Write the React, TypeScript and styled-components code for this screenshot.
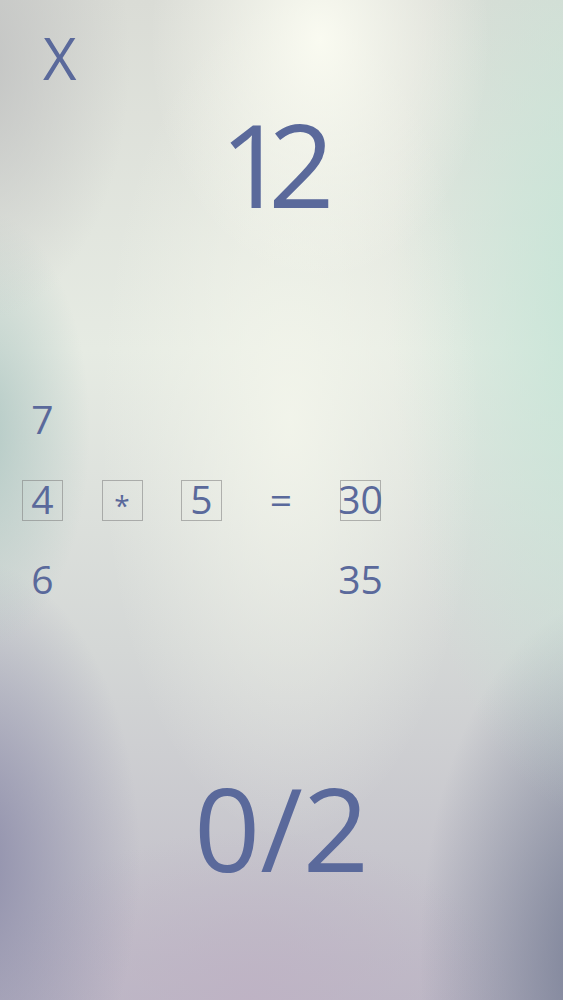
import React from 'react';
import styled, { createGlobalStyle } from 'styled-components';

const GlobalStyle = createGlobalStyle`
  html, body {
    margin: 0;
    padding: 0;
  }
  body {
    font-family: 'Open Sans', 'Noto Sans', sans-serif;
  }
`;

const INK = '#5a699b';

const Screen = styled.div`
  position: relative;
  width: 563px;
  min-height: 1000px;
  box-sizing: border-box;
  padding-top: 30px;
  overflow: hidden;
  color: ${INK};
  background:
    radial-gradient(ellipse 170px 240px at 320px 40px, rgba(251, 252, 242, 0.95), rgba(251, 252, 242, 0) 100%),
    radial-gradient(ellipse 190px 420px at 290px 420px, rgba(244, 246, 236, 0.85), rgba(244, 246, 236, 0) 100%),
    radial-gradient(ellipse 210px 520px at 600px 300px, rgba(196, 228, 214, 0.95), rgba(196, 228, 214, 0) 100%),
    radial-gradient(ellipse 150px 260px at -20px 60px, rgba(192, 193, 193, 0.9), rgba(192, 193, 193, 0) 100%),
    radial-gradient(ellipse 110px 220px at -20px 430px, rgba(170, 196, 192, 0.85), rgba(170, 196, 192, 0) 100%),
    radial-gradient(ellipse 170px 300px at -30px 860px, rgba(138, 138, 168, 0.95), rgba(138, 138, 168, 0) 100%),
    radial-gradient(ellipse 190px 360px at 610px 960px, rgba(112, 120, 144, 0.95), rgba(112, 120, 144, 0) 100%),
    radial-gradient(ellipse 260px 170px at 250px 1000px, rgba(190, 178, 196, 0.9), rgba(190, 178, 196, 0) 100%),
    linear-gradient(180deg, #dadcd6 0%, #e6ebe3 35%, #d4d7d6 65%, #bdb9c6 100%);
`;

const CloseMark = styled.div`
  padding-left: 43px;
  font-size: 58px;
  line-height: 56px;
  height: 56px;
`;

/* the digits sit tighter than Open Sans' tabular figures */
const Timer = styled.div`
  margin-top: 19px;
  padding-left: 220px;
  font-size: 116px;
  line-height: 116px;
  height: 116px;
  letter-spacing: -18px;
`;

const Board = styled.div`
  margin-top: 179px;
  padding-left: 22px;
  display: grid;
  grid-template-columns: repeat(5, 41px);
  grid-auto-rows: 41px;
  column-gap: 38.5px;
  row-gap: 39px;
`;

const Cell = styled.div<{ $boxed?: boolean; $small?: boolean }>`
  box-sizing: border-box;
  height: 41px;
  display: flex;
  justify-content: center;
  white-space: nowrap;
  font-size: ${(p) => (p.$small ? '28px' : '39px')};
  line-height: ${(p) => (p.$small ? '41px' : '36px')};
  padding-top: ${(p) => (p.$small ? '4px' : '0')};
  border: 1px solid ${(p) => (p.$boxed ? 'rgba(125, 125, 125, 0.55)' : 'transparent')};
`;

const Score = styled.div`
  margin-top: 168px;
  text-align: center;
  font-size: 116px;
  line-height: 116px;
  height: 116px;
`;

type Slot = { text?: string; boxed?: boolean; small?: boolean };

const rows: Slot[][] = [
  [{ text: '7' }, {}, {}, {}, {}],
  [
    { text: '4', boxed: true },
    { text: '*', boxed: true, small: true },
    { text: '5', boxed: true },
    { text: '=' },
    { text: '30', boxed: true },
  ],
  [{ text: '6' }, {}, {}, {}, { text: '35' }],
];

export default function App() {
  return (
    <>
      <GlobalStyle />
      <Screen>
        <CloseMark>X</CloseMark>
        <Timer>12</Timer>
        <Board>
          {rows.flatMap((row, r) =>
            row.map((slot, c) => (
              <Cell key={`${r}-${c}`} $boxed={slot.boxed} $small={slot.small}>
                {slot.text}
              </Cell>
            ))
          )}
        </Board>
        <Score>0/2</Score>
      </Screen>
    </>
  );
}
